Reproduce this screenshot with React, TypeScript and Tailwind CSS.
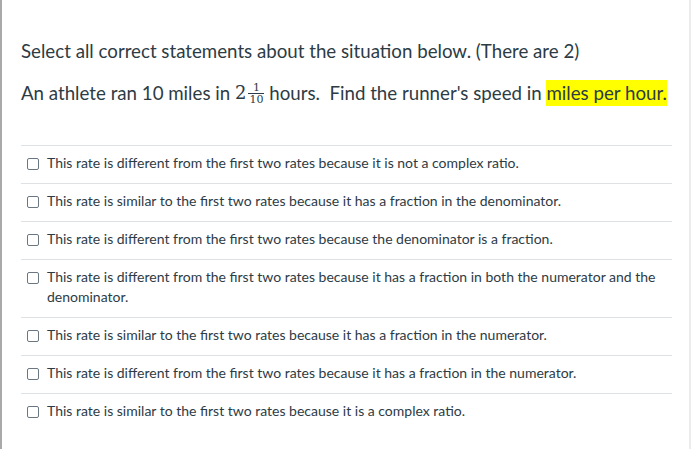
import { useState } from "react"

const options = [
  "This rate is different from the first two rates because it is not a complex ratio.",
  "This rate is similar to the first two rates because it has a fraction in the denominator.",
  "This rate is different from the first two rates because the denominator is a fraction.",
  "This rate is different from the first two rates because it has a fraction in both the numerator and the denominator.",
  "This rate is similar to the first two rates because it has a fraction in the numerator.",
  "This rate is different from the first two rates because it has a fraction in the numerator.",
  "This rate is similar to the first two rates because it is a complex ratio.",
]

export default function App() {
  const [checked, setChecked] = useState<boolean[]>(options.map(() => false))

  return (
    <div
      className="w-[691px] h-[449px] bg-white border-l-2 border-l-[#a9a9a9] border-r-2 border-r-[#ececec] overflow-hidden text-[#2d3b45]"
      style={{ fontFamily: "Lato, 'Liberation Sans', sans-serif" }}
    >
      <div className="pl-[19px] pr-[17px] pt-[38px]">
        {/* Question text */}
        <p className="text-[18.7px] leading-[26px]">Select all correct statements about the situation below. (There are 2)</p>
        <p className="text-[18.7px] leading-[26px] mt-[16px] flex items-center">
          <span>An athlete ran 10 miles in&nbsp;</span>
          <span className="inline-flex items-center" style={{ fontFamily: "'DejaVu Serif', 'Liberation Serif', serif" }}>
            <span className="text-[18px]">2</span>
            <span className="inline-flex flex-col items-center ml-[2px] text-[11px] leading-[11px]">
              <span className="px-[1px]">1</span>
              <span className="border-t border-[#2d3b45] px-[1px]">10</span>
            </span>
          </span>
          <span>&nbsp;hours.&nbsp; Find the runner's speed in&nbsp;</span>
          <span className="bg-[#ffff00]">miles per hour.</span>
        </p>

        {/* Answers */}
        <div className="mt-[39px] border-t border-[#dfe2e5]">
          {options.map((opt, i) => (
            <label
              key={i}
              className={`flex items-start gap-[8px] px-[6px] pt-[7px] pb-[10px] cursor-pointer ${i < options.length - 1 ? "border-b border-[#dfe2e5]" : ""}`}
            >
              <input
                type="checkbox"
                checked={checked[i]}
                onChange={() => setChecked(checked.map((c, j) => (j === i ? !c : c)))}
                className="appearance-none mt-[5px] w-[12px] h-[12px] shrink-0 rounded-[2px] border border-[#6b7780] bg-white checked:bg-[#0374b5]"
              />
              <span className="text-[14px] leading-[20px]">{opt}</span>
            </label>
          ))}
        </div>
      </div>
    </div>
  )
}
